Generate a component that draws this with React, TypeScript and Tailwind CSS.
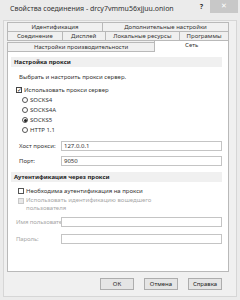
const tabBase =
  "flex h-[10px] items-center justify-center border border-[#b9b9b9] bg-[#f0f0f0] text-[6px] text-[#333] -ml-px first:ml-0";

const Radio = ({ label, checked }: { label: string; checked?: boolean }) => (
  <div className="flex h-[10px] items-center">
    <span className="ml-[11px] flex h-[6px] w-[6px] items-center justify-center rounded-full border border-[#555] bg-white">
      {checked && <span className="h-[3px] w-[3px] rounded-full bg-[#222]" />}
    </span>
    <span className="ml-[2px] text-[6px] text-[#333]">{label}</span>
  </div>
);

const Field = ({ label, value, disabled }: { label: string; value?: string; disabled?: boolean }) => (
  <div className="flex h-[10px] items-center">
    <span
      className={
        "w-[50px] shrink-0 whitespace-nowrap text-[6px] " +
        (disabled ? "pl-[5px] tracking-[-0.1px] text-[#a8a8a8]" : "pl-[8px] text-[#333]")
      }
    >
      {label}
    </span>
    <div className="flex h-[10px] flex-1 items-center border border-[#c4c4c4] bg-white pl-[2px] text-[6px] text-[#333]">
      {value}
    </div>
  </div>
);

const Header = ({ title }: { title: string }) => (
  <div className="flex h-[10px] items-center bg-[#f0f0f0] pl-[3px] text-[6px] font-bold text-[#222]">
    {title}
  </div>
);

const Button = ({ label }: { label: string }) => (
  <button className="flex h-[12px] w-[34px] items-center justify-center border border-[#adadad] bg-[#e5e5e5] text-[6px] text-[#222]">
    {label}
  </button>
);

export default function App() {
  return (
    <div
      className="relative h-[300px] w-[240px] overflow-hidden bg-[#ebebeb]"
      style={{ fontFamily: '"Noto Sans", "Open Sans", sans-serif' }}
    >
      {/* Title bar */}
      <div className="flex h-[20px] items-start">
        <span className="whitespace-nowrap pl-[10px] pt-[4px] text-[7px] text-[#333]">
          Свойства соединения - drcy7vmmu56xjjuu.onion
        </span>
        <span className="ml-auto pt-[2px] text-[7px] font-bold text-[#333]">?</span>
        <div className="ml-[7px] mr-[2px] flex h-[13px] w-[28px] items-center justify-center bg-[#c8c8c8] text-[7px] text-white">
          ✕
        </div>
      </div>

      {/* Client area */}
      <div className="ml-[3px] h-[277px] w-[234px] border border-[#d6d6d6] bg-[#f0f0f0] pl-[3px] pt-px">
        <div className="w-[222px]">
          <div className="flex">
            <div className={tabBase + " w-[96px]"}>Идентификация</div>
            <div className={tabBase + " w-[127px]"}>Дополнительные настройки</div>
          </div>
          <div className="-mt-px flex">
            <div className={tabBase + " w-[56px]"}>Соединение</div>
            <div className={tabBase + " w-[44px]"}>Дисплей</div>
            <div className={tabBase + " w-[76px]"}>Локальные ресурсы</div>
            <div className={tabBase + " w-[50px]"}>Программы</div>
          </div>
          <div className="relative z-10 -mt-px flex items-end">
            <div className={tabBase + " w-[149px]"}>Настройки производительности</div>
            <div className="-ml-px flex h-[12px] w-[75px] items-center justify-center border border-b-0 border-[#b9b9b9] bg-white pb-[2px] text-[6px] text-[#333]">
              Сеть
            </div>
          </div>

          {/* Panel */}
          <div className="-mt-px h-[221px] border border-[#b9b9b9] bg-white pl-[3px] pr-[6px] pt-[5px]">
            <Header title="Настройка прокси" />
            <div className="mt-[6px] pl-[8px] text-[6px] text-[#333]">
              Выбрать и настроить прокси сервер.
            </div>
            <div className="mt-[3px] flex h-[10px] items-center">
              <span className="ml-[5px] flex h-[6px] w-[6px] items-center justify-center border border-[#444] bg-white text-[6px] leading-none text-[#222]">
                ✓
              </span>
              <span className="ml-[2px] text-[6px] text-[#333]">Использовать прокси сервер</span>
            </div>
            <Radio label="SOCKS4" />
            <Radio label="SOCKS4A" />
            <Radio label="SOCKS5" checked />
            <Radio label="HTTP 1.1" />

            <div className="mt-[6px] flex flex-col gap-[5px]">
              <Field label="Хост прокси:" value="127.0.0.1" />
              <Field label="Порт:" value="9050" />
            </div>

            <div className="mt-[6px]">
              <Header title="Аутентификация через прокси" />
            </div>
            <div className="mt-[4px] flex h-[10px] items-center">
              <span className="ml-[7px] h-[6px] w-[6px] border border-[#555] bg-white" />
              <span className="ml-[2px] text-[6px] text-[#333]">
                Необходима аутентификация на прокси
              </span>
            </div>
            <div className="flex items-start">
              <span className="ml-[7px] mt-[2px] h-[6px] w-[6px] border border-[#c8c8c8] bg-[#e8e8e8]" />
              <span className="ml-[2px] w-[140px] text-[6px] leading-[8px] text-[#a8a8a8]">
                Использовать идентификацию вошедшего пользователя
              </span>
            </div>

            <div className="mt-[5px] flex flex-col gap-[7px]">
              <Field label="Имя пользовате" disabled />
              <Field label="Пароль:" disabled />
            </div>
          </div>

          {/* Buttons */}
          <div className="mt-[6px] flex justify-end gap-[10px] pr-[7px]">
            <Button label="ОК" />
            <Button label="Отмена" />
            <Button label="Справка" />
          </div>
        </div>
      </div>
    </div>
  );
}
